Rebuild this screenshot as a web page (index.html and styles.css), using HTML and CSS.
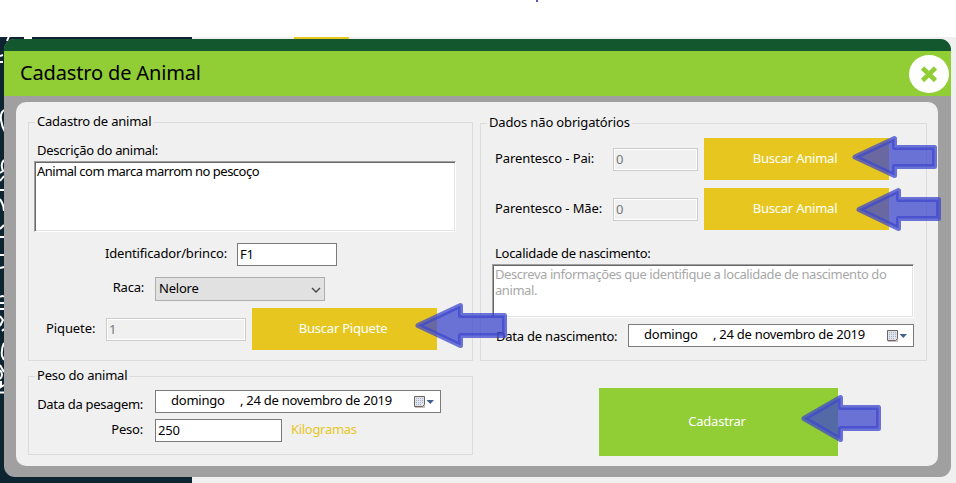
FILE: index.html
```html
<!DOCTYPE html>
<html lang="pt-BR">
<head>
<meta charset="utf-8">
<title>Cadastro de Animal</title>
<link rel="stylesheet" href="styles.css">
</head>
<body>
<div class="strip"><i class="dot"></i></div>
<div class="app">
  <aside class="sidebar">
    <svg class="scraps" width="34" height="446" viewBox="0 37 34 446" fill="none" stroke="#fff" stroke-width="2">
      <path d="M7 41l2-5M24 38h8M0 56l3-1M0 62h3M4 110q-4 3-3 10t4 12M4 160q-4 4-1 11l-3 2M0 181l4-5M0 190h4M0 199q4 6 4 12M0 229l4-4M0 237h4M0 255h4M0 268l4-1M0 297q3-2 4 0M0 303h4M0 309h4M0 316l3 4-3 6M4 329l-2 2M4 343q-3 6-2 13l2 4M0 365l4 7M0 370q4 5 0 9M1 381v6l3-2M0 392.5h4"/>
    </svg>
  </aside>
  <div class="behind"><i class="chip"></i></div>
</div>

<main class="modal">
  <div class="modal-top"></div>
  <header class="modal-head">
    <h1>Cadastro de Animal</h1>
    <button class="close" aria-label="Fechar">
      <svg width="40" height="38" viewBox="0 0 40 38"><ellipse cx="20" cy="19" rx="20" ry="19" fill="#fff"/><path d="M13.5 13l13 12.500M26.500 13l-13 12.500" stroke="#91cd35" stroke-width="4.600"/></svg>
    </button>
  </header>
  <div class="modal-body">
    <div class="panel">
      <div class="col-left">
        <fieldset class="g-animal">
          <legend>Cadastro de animal</legend>
          <label class="lb-desc">Descrição do animal:</label>
          <div class="area area-desc">Animal com marca marrom no pescoço</div>
          <div class="row row-id"><label>Identificador/brinco:</label><div class="field">F1</div></div>
          <div class="row row-raca"><label>Raca:</label><div class="select">Nelore
            <svg width="10" height="6" viewBox="0 0 10 6"><path d="M1 1l4 4 4-4" fill="none" stroke="#444" stroke-width="1.300"/></svg></div></div>
          <div class="row row-piq"><label>Piquete:</label><div class="field off">1</div><button class="btn">Buscar Piquete</button></div>
        </fieldset>
        <fieldset class="g-peso">
          <legend>Peso do animal</legend>
          <div class="row row-date"><label>Data da pesagem:</label>
            <div class="date"><span class="day">domingo</span><span class="rest">, 24 de novembro de 2019</span>
              <svg width="22" height="14" viewBox="0 0 22 14"><rect x="2" y="2" width="10" height="11" fill="#c9c0bd"/><path d="M1.500 1.500h10v8l-2 2h-8z" fill="#dfe3ec" stroke="#6d6461"/><path d="M3 3.500h7M3 5.500h7M3 7.500h7M3 9.500h6" stroke="#a9b1c8" stroke-dasharray="1 1"/><path d="M13.500 5h7.500l-3.750 4z" fill="#41608c"/></svg>
            </div></div>
          <div class="row row-peso"><label>Peso:</label><div class="field">250</div><span class="unit">Kilogramas</span></div>
        </fieldset>
      </div>
      <div class="col-right">
        <fieldset class="g-dados">
          <legend>Dados não obrigatórios</legend>
          <div class="row row-par"><label>Parentesco - Pai:</label><div class="field off">0</div><button class="btn">Buscar Animal</button></div>
          <div class="row row-par"><label>Parentesco - Mãe:</label><div class="field off">0</div><button class="btn">Buscar Animal</button></div>
          <label class="lb-local">Localidade de nascimento:</label>
          <div class="area area-local">Descreva informações que identifique a localidade de nascimento do animal.</div>
          <div class="row row-nasc"><label>Data de nascimento:</label>
            <div class="date"><span class="day">domingo</span><span class="rest">, 24 de novembro de 2019</span>
              <svg width="22" height="14" viewBox="0 0 22 14"><rect x="2" y="2" width="10" height="11" fill="#c9c0bd"/><path d="M1.500 1.500h10v8l-2 2h-8z" fill="#dfe3ec" stroke="#6d6461"/><path d="M3 3.500h7M3 5.500h7M3 7.500h7M3 9.500h6" stroke="#a9b1c8" stroke-dasharray="1 1"/><path d="M13.500 5h7.500l-3.750 4z" fill="#41608c"/></svg>
            </div></div>
        </fieldset>
        <button class="btn submit">Cadastrar</button>
      </div>
    </div>
  </div>
</main>

<svg class="arrows" width="956" height="483" viewBox="0 0 956 483">
  <path d="M855 157L894.500 138.500V147.500H934.500V166.500H894.500V175.500Z"/>
  <path d="M859 209.500L898.500 190.500V199.500H938.500V218.500H898.500V228.500Z"/>
  <path d="M418 325.500L460.500 305.500V315.500H504.500V335.500H460.500V345.500Z"/>
  <path d="M804 418.500L840.500 397.500V407.500H878.500V428.500H840.500V439.500Z"/>
</svg>
</body>
</html>
```
FILE: styles.css
```css
* { box-sizing: border-box; }
body { margin: 0; width: 956px; height: 483px; overflow: hidden; position: relative; background: #fff; color: #000; font: 13px/16px "Noto Sans", sans-serif; letter-spacing: -0.22px; }
button { border: 0; padding: 0; font: inherit; letter-spacing: inherit; }
.strip { height: 37px; }
.dot { display: block; width: 2px; height: 2px; margin-left: 536px; background: #5a55b5; }
.app { display: flex; height: 446px; background: #f0f0f0; }
.sidebar { width: 192px; background: #0d2431; }
.scraps { display: block; }
.behind { flex: 1; }
.chip { display: block; width: 55px; height: 3px; margin-left: 102px; background: #e7c71f; }

.modal { position: absolute; left: 4px; top: 39px; width: 947px; height: 438px; border-radius: 11px; overflow: hidden; background: #a0a0a0; }
.modal-top { height: 12px; background: #12572e; }
.modal-head { height: 45px; background: #91cd35; display: flex; align-items: center; justify-content: space-between; padding: 0 2px 0 16px; }
h1 { margin: 0; padding-bottom: 2px; font-size: 20px; line-height: 28px; font-weight: 400; letter-spacing: -0.15px; }
.close { background: none; height: 38px; }
.close svg { display: block; }
.modal-body { padding: 6px 13px 11px 12px; }
.panel { height: 364px; border-radius: 10px; background: #f0f0f0; display: flex; gap: 7px; padding: 12px 11px 0 12px; }
.col-left { width: 445px; }
.col-right { width: 447px; padding-top: 1px; }

fieldset { margin: 0; padding: 0; border: 1px solid #dcdcdc; min-width: 0; }
legend { margin-left: 6px; padding: 0 2px; height: 16px; line-height: 14px; white-space: nowrap; }
label { display: block; white-space: nowrap; }
.row { display: flex; }
.row > label { flex: none; }

.g-animal { height: 247px; }
.lb-desc { margin: 12px 0 3px 8px; letter-spacing: -0.3px; }
.area { background: #fff; border: 1px solid; border-color: #a0a0a0 #fff #fff #a0a0a0; box-shadow: inset 1px 1px #696969, inset -1px -1px #e3e3e3; padding: 1px 2px; line-height: 16px; }
.area-desc { width: 422px; height: 71px; margin-left: 5px; letter-spacing: -0.51px; }
.field { background: #fff; border: 1px solid #7a7a7a; height: 23px; padding: 2px; line-height: 16px; }
.field.off { background: #f0f0f0; border-color: #ccc; color: #787878; box-shadow: inset 0 0 0 1px #fff; }
.btn { background: #e7c71f; color: #fff; width: 185px; height: 42px; padding: 0 3px 2px 0; text-align: center; flex: none; }
.row-id { margin-top: 11px; }
.row-id label { width: 198px; text-align: right; margin: 2px 10px 0 0; letter-spacing: -0.17px; }
.row-id .field { width: 100px; }
.row-raca { margin-top: 11px; }
.row-raca label { width: 115px; text-align: right; margin: 2px 11px 0 0; }
.select { width: 170px; height: 24px; border: 1px solid #adadad; background: #e1e1e1; display: flex; justify-content: space-between; align-items: center; padding: 0 3px 2px; }
.select svg { margin-top: 3px; }
.row-piq { margin-top: 7px; align-items: flex-start; }
.row-piq label { width: 50px; margin: 12px 10px 0 17px; letter-spacing: -0.1px; }
.row-piq .field { width: 140px; margin: 10px 6px 0 0; }

.g-peso { height: 87px; margin-top: 7px; }
.date { width: 286px; height: 23px; background: #fff; border: 1px solid #7a7a7a; display: flex; padding: 1px 5px 0 15px; line-height: 17px; white-space: nowrap; }
.date .day { width: 69px; }
.date .rest { flex: 1; letter-spacing: -0.27px; }
.date svg { margin-top: 3px; }
.row-date { margin-top: 6px; }
.row-date label, .row-peso label { width: 106px; text-align: right; margin: 6px 12px 0 8px; }
.row-date label { letter-spacing: -0.3px; }
.row-date .date, .row-nasc .date { flex: none; }
.row-peso { margin-top: 6px; }
.row-peso label { margin-top: 2px; }
.row-peso .field { width: 127px; }
.unit { color: #e7c71f; margin: 2px 0 0 9px; letter-spacing: -0.3px; }

.g-dados { height: 246px; }
.g-dados legend { letter-spacing: -0.15px; }
.row-par { margin-top: 7px; padding-left: 14px; }
.row-par + .row-par { margin-top: 8px; }
.row-par label { width: 118px; margin-top: 12px; letter-spacing: -0.1px; }
.row-par .field { width: 85px; margin: 10px 6px 0 0; }
.lb-local { margin: 15px 0 3px 14px; letter-spacing: -0.27px; }
.area-local { width: 422px; height: 54px; margin-left: 11px; color: #a8a8a8; letter-spacing: -0.43px; }
.row-nasc { margin-top: 6px; padding-left: 15px; }
.row-nasc label { width: 132px; margin-top: 4px; }
.submit { display: block; width: 239px; height: 68px; margin: 27px 0 0 119px; background: #91cd35; }

.arrows { position: absolute; left: 0; top: 0; pointer-events: none; }
.arrows path { fill: rgba(63, 72, 204, .75); stroke: rgba(63, 72, 204, .75); stroke-width: 5; stroke-linejoin: round; }
```
